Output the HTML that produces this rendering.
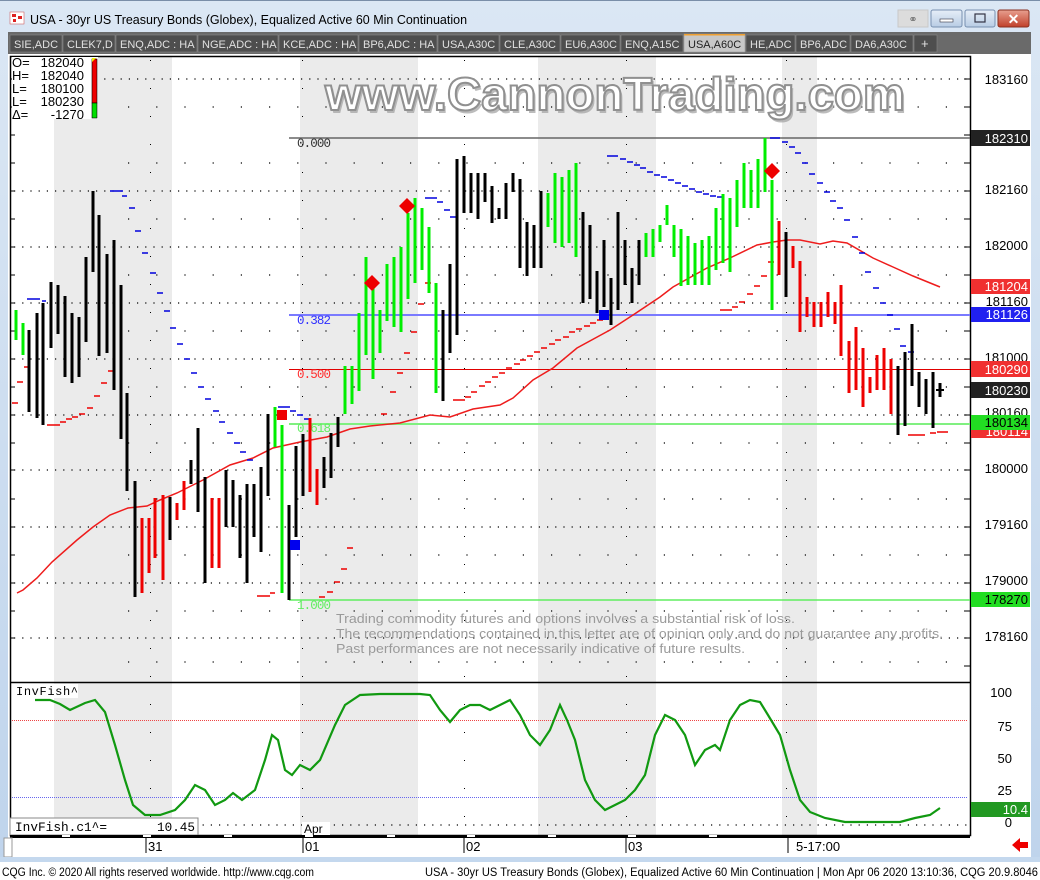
<!DOCTYPE html>
<html><head><meta charset="utf-8"><style>
html,body{margin:0;padding:0;width:1040px;height:880px;overflow:hidden;background:#fff;font-family:"Liberation Sans",sans-serif}
svg{position:absolute;left:0;top:0}
</style></head><body>
<svg width="1040" height="880" viewBox="0 0 1040 880" xmlns="http://www.w3.org/2000/svg" font-family="Liberation Sans, sans-serif">
<defs>
<linearGradient id="tb" x1="0" y1="0" x2="0" y2="1"><stop offset="0" stop-color="#dbe7f4"/><stop offset="1" stop-color="#bfd4ec"/></linearGradient>
<linearGradient id="cl" x1="0" y1="0" x2="0" y2="1"><stop offset="0" stop-color="#e8a090"/><stop offset="1" stop-color="#c0402a"/></linearGradient>
<linearGradient id="bt" x1="0" y1="0" x2="0" y2="1"><stop offset="0" stop-color="#e6eef8"/><stop offset="1" stop-color="#b8cce4"/></linearGradient>
</defs>
<rect x="0" y="0" width="1040" height="862" fill="url(#tb)"/>
<rect x="0" y="0" width="1040" height="1" fill="#7a8ea8"/>
<rect x="10" y="12" width="14" height="12" fill="#fff" stroke="#c44" stroke-width="0.5"/>
<rect x="12" y="14" width="4" height="3" fill="#d22"/><rect x="18" y="16" width="4" height="3" fill="#d22"/><rect x="13" y="19" width="3" height="3" fill="#d22"/>
<text x="30" y="24" font-size="12.5" fill="#000">USA - 30yr US Treasury Bonds (Globex), Equalized Active 60 Min Continuation</text>
<rect x="898" y="10" width="30" height="17" fill="#dcdcdc" stroke="#c8c8c8"/>
<text x="913" y="23" font-size="11" fill="#777" text-anchor="middle">⚭</text>
<rect x="931" y="10" width="31" height="17" rx="2" fill="url(#bt)" stroke="#7890b0"/>
<rect x="940" y="19" width="13" height="3" fill="#fff" stroke="#334" stroke-width="0.6"/>
<rect x="965" y="10" width="30" height="17" rx="2" fill="url(#bt)" stroke="#7890b0"/>
<rect x="975" y="14" width="10" height="8" fill="none" stroke="#334" stroke-width="1.2"/>
<rect x="998" y="10" width="31" height="17" rx="2" fill="url(#cl)" stroke="#8a3020"/>
<text x="1013.5" y="24" font-size="14" font-weight="bold" fill="#fff" text-anchor="middle">✕</text>
<rect x="8" y="32" width="1023" height="22" fill="#6a6a6a"/>
<g font-size="11" fill="#e0e0e0">
<rect x="10" y="35" width="52" height="17" fill="#4e4e4e" stroke="#888" stroke-width="0.6"/><text x="14" y="48">SIE,ADC</text>
<rect x="63" y="35" width="52" height="17" fill="#4e4e4e" stroke="#888" stroke-width="0.6"/><text x="67" y="48">CLEK7,D</text>
<rect x="116" y="35" width="81" height="17" fill="#4e4e4e" stroke="#888" stroke-width="0.6"/><text x="120" y="48">ENQ,ADC : HA</text>
<rect x="198" y="35" width="80" height="17" fill="#4e4e4e" stroke="#888" stroke-width="0.6"/><text x="202" y="48">NGE,ADC : HA</text>
<rect x="279" y="35" width="79" height="17" fill="#4e4e4e" stroke="#888" stroke-width="0.6"/><text x="283" y="48">KCE,ADC : HA</text>
<rect x="359" y="35" width="78" height="17" fill="#4e4e4e" stroke="#888" stroke-width="0.6"/><text x="363" y="48">BP6,ADC : HA</text>
<rect x="438" y="35" width="61" height="17" fill="#4e4e4e" stroke="#888" stroke-width="0.6"/><text x="442" y="48">USA,A30C</text>
<rect x="500" y="35" width="60" height="17" fill="#4e4e4e" stroke="#888" stroke-width="0.6"/><text x="504" y="48">CLE,A30C</text>
<rect x="561" y="35" width="59" height="17" fill="#4e4e4e" stroke="#888" stroke-width="0.6"/><text x="565" y="48">EU6,A30C</text>
<rect x="621" y="35" width="62" height="17" fill="#4e4e4e" stroke="#888" stroke-width="0.6"/><text x="625" y="48">ENQ,A15C</text>
<rect x="684" y="34" width="61" height="18" fill="#c8c8c8" stroke="#999" stroke-width="0.6"/><rect x="684" y="34" width="61" height="1.5" fill="#f0a030"/><text x="688" y="48" fill="#222">USA,A60C</text>
<rect x="746" y="35" width="49" height="17" fill="#4e4e4e" stroke="#888" stroke-width="0.6"/><text x="750" y="48">HE,ADC</text>
<rect x="796" y="35" width="54" height="17" fill="#4e4e4e" stroke="#888" stroke-width="0.6"/><text x="800" y="48">BP6,ADC</text>
<rect x="851" y="35" width="62" height="17" fill="#4e4e4e" stroke="#888" stroke-width="0.6"/><text x="855" y="48">DA6,A30C</text>
<rect x="914" y="35" width="23" height="17" fill="#4e4e4e" stroke="#888" stroke-width="0.6"/><text x="921" y="48" font-size="13">+</text>
</g>
<rect x="8" y="54" width="1023" height="808" fill="#fff"/>
<g fill="#ebebeb">
<rect x="54" y="57" width="118" height="778"/><rect x="300" y="57" width="118" height="778"/><rect x="538" y="57" width="118" height="778"/><rect x="782" y="57" width="35" height="778"/>
</g>
<rect x="10.5" y="56.5" width="960" height="779" fill="none" stroke="#000" stroke-width="1.5"/>
<line x1="10" y1="682.5" x2="971" y2="682.5" stroke="#000" stroke-width="1.5"/>
<g stroke="#000" stroke-width="1.2" stroke-dasharray="1.2 7">
<line x1="14" y1="79" x2="968" y2="79"/><line x1="14" y1="191" x2="968" y2="191"/><line x1="14" y1="247" x2="968" y2="247"/><line x1="14" y1="303" x2="968" y2="303"/><line x1="14" y1="359" x2="968" y2="359"/><line x1="14" y1="415" x2="968" y2="415"/><line x1="14" y1="470" x2="968" y2="470"/><line x1="14" y1="527" x2="968" y2="527"/><line x1="14" y1="583" x2="968" y2="583"/><line x1="14" y1="638" x2="968" y2="638"/>
<line x1="14" y1="825" x2="968" y2="825"/>
</g>
<g stroke="#000" stroke-width="1.2" stroke-dasharray="1.2 27">
<line x1="128" y1="163" x2="968" y2="163"/><line x1="128" y1="219" x2="968" y2="219"/><line x1="128" y1="275" x2="968" y2="275"/><line x1="128" y1="331" x2="968" y2="331"/><line x1="128" y1="387" x2="968" y2="387"/><line x1="128" y1="443" x2="968" y2="443"/><line x1="128" y1="499" x2="968" y2="499"/><line x1="128" y1="555" x2="968" y2="555"/><line x1="128" y1="611" x2="968" y2="611"/><line x1="128" y1="107" x2="968" y2="107"/><line x1="128" y1="662" x2="968" y2="662"/>
</g>
<g stroke="#000" stroke-width="1" stroke-dasharray="1 27">
<line x1="302.5" y1="60" x2="302.5" y2="835"/><line x1="464.5" y1="60" x2="464.5" y2="835"/><line x1="626.5" y1="60" x2="626.5" y2="835"/><line x1="786.5" y1="60" x2="786.5" y2="835"/><line x1="150.5" y1="60" x2="150.5" y2="835"/>
</g>
<g stroke="#000" stroke-width="1"><path d="M964 79h6M964 107h6M964 135h6M964 163h6M964 191h6M964 219h6M964 247h6M964 275h6M964 303h6M964 331h6M964 359h6M964 387h6M964 415h6M964 443h6M964 470h6M964 499h6M964 527h6M964 555h6M964 583h6M964 611h6M964 638h6M964 666h6"/><path d="M10 79h5M10 107h5M10 135h5M10 163h5M10 191h5M10 219h5M10 247h5M10 275h5M10 303h5M10 331h5M10 359h5M10 387h5M10 415h5M10 443h5M10 470h5M10 499h5M10 527h5M10 555h5M10 583h5M10 611h5M10 638h5"/></g>
<text x="325" y="110" font-size="46" font-weight="bold" fill="#a0a0a0" textLength="580" lengthAdjust="spacingAndGlyphs" transform="translate(2,3)" opacity="0.7">www.CannonTrading.com</text>
<text x="325" y="110" font-size="46" font-weight="bold" fill="#fff" stroke="#909090" stroke-width="2" textLength="580" lengthAdjust="spacingAndGlyphs">www.CannonTrading.com</text>
<line x1="289" y1="138" x2="970" y2="138" stroke="#666" stroke-width="1.5"/>
<line x1="289" y1="315" x2="970" y2="315" stroke="#7a7aff" stroke-width="2"/>
<line x1="289" y1="369.5" x2="970" y2="369.5" stroke="#e00000" stroke-width="1"/>
<line x1="289" y1="424" x2="970" y2="424" stroke="#80f080" stroke-width="2"/>
<line x1="289" y1="600" x2="970" y2="600" stroke="#60ee60" stroke-width="1.5"/>
<g font-size="12.5" font-family="Liberation Mono, monospace">
<text x="297" y="147" fill="#333" textLength="34">0.000</text>
<text x="297" y="324" fill="#3030ff" textLength="34">0.382</text>
<text x="297" y="378" fill="#ff3030" textLength="34">0.500</text>
<text x="297" y="432" fill="#60ee60" textLength="34">0.618</text>
<text x="297" y="609" fill="#60ee60" textLength="34">1.000</text>
</g>
<polyline fill="none" stroke="#ee1c1c" stroke-width="1.5" points="17,593 23,590 37,578 52,562 77,540 93,527 110,515 128,508 147,506 160,500 177,493 203,480 230,465 253,458 273,448 300,442 327,437 350,429 370,426 400,423 430,415 450,417 473,409 500,405 513,398 533,380 553,368 577,348 610,330 633,315 660,297 673,287 707,268 730,258 757,245 773,242 787,240 800,240 820,244 833,241 847,243 873,258 893,267 913,276 940,287"/>
<path fill="none" stroke="#0000dd" stroke-width="1.5" d="M27 299h13M42 301h4M110 191h13M122 196h5M129 208h6M135 231h6M142 253h6M150 273h6M157 293h6M164 311h6M170 328h6M177 344h6M184 359h6M191 373h6M198 387h6M205 399h6M213 411h6M219 422h6M227 433h6M234 443h6M240 452h6M247 460h6M278 407h12M290 411h6M297 415h6M304 419h6M425 198h12M437 202h6M444 210h6M450 217h6M607 156h11M620 159h6M627 162h6M634 165h6M640 168h6M647 172h6M654 175h6M661 177h6M668 180h6M675 183h6M682 186h6M689 189h6M696 192h6M703 194h6M710 196h6M717 197h6M770 138h10M782 142h6M789 147h6M795 153h6M802 163h6M809 174h6M817 183h6M824 192h6M830 201h6M837 208h6M844 220h6M852 237h6M859 253h6M865 272h6M873 288h6M880 303h6M887 315h6M894 329h6M900 346h6M908 352h6"/>
<path fill="none" stroke="#ee0000" stroke-width="1.5" d="M12 403h6M17 382h6M24 367h6M47 425h13M60 422h6M66 419h6M72 417h6M79 414h6M87 408h6M94 396h6M101 383h6M108 371h6M257 596h13M270 593h5M319 597h6M327 592h6M334 582h6M341 569h6M347 548h6M381 414h6M390 392h6M397 373h6M404 353h6M411 332h6M418 304h6M425 283h6M453 400h12M465 397h6M471 392h6M479 386h6M485 382h6M492 377h6M499 373h6M506 368h6M514 364h6M520 360h6M527 356h6M534 352h6M541 348h6M549 344h6M555 340h6M563 337h6M569 332h6M576 329h6M584 326h6M590 323h6M597 320h6M720 310h12M732 307h6M739 302h6M747 294h6M754 286h6M761 276h6M768 262h6M908 435h17M930 433h6M937 432h11"/>
<path fill="none" stroke="#00ee00" stroke-width="3" d="M16 310V340M23 323V355M275 407V447M282 425V593M345 366V414M352 366V404M359 313V391M366 257V355M373 283V379M380 310V353M387 264V321M394 257V327M401 247V332M408 213V299M415 198V283M422 208V270M429 227V293M436 283V393M548 193V227M555 173V243M562 177V247M569 170V243M576 163V257M646 233V257M653 229V257M660 225V242M667 205V225M674 225V257M681 229V286M688 236V285M695 243V285M702 240V285M709 236V285M716 208V270M723 194V263M730 198V272M737 180V227M744 163V208M751 170V208M758 159V208M765 138V192M772 180V310"/>
<path fill="none" stroke="#000" stroke-width="3" d="M29 330V412M37 313V418M43 303V425M51 282V348M58 285V334M65 296V377M72 313V383M79 317V377M86 257V342M93 191V272M99 215V356M107 254V353M114 240V390M121 285V439M127 393V491M135 481V597M170 497V540M191 460V484M198 428V512M205 477V583M226 470V527M233 480V527M240 495V558M247 484V583M254 484V537M261 467V552M268 414V496M289 505V600M296 446V537M303 434V496M324 457V488M331 433V478M338 417V447M443 310V401M450 264V353M457 159V335M464 156V213M471 173V213M478 173V219M485 173V202M492 186V223M499 208V219M506 183V219M513 173V192M520 179V268M527 222V276M534 225V268M541 191V268M583 212V303M590 225V299M597 271V313M604 240V307M611 278V325M618 212V310M625 240V285M632 268V303M639 240V285M786 232V297M898 366V435M905 352V426M912 324V386M919 372V407M926 379V414M933 372V428M940 383V397"/>
<path fill="none" stroke="#ee0000" stroke-width="3" d="M142 518V593M149 518V573M155 498V558M163 495V580M177 503V520M184 481V510M212 498V568M219 498V568M310 418V492M317 469V505M779 221V275M793 246V268M800 261V332M807 297V317M814 302V327M821 302V327M828 292V317M835 302V324M841 285V356M849 341V393M856 327V390M863 348V407M870 377V393M877 355V390M884 348V390M891 359V414"/>
<path fill="none" stroke="#000" stroke-width="2" d="M936 390h8"/>
<g fill="#ee0000"><path d="M372 275l8 8-8 8-8-8z"/><path d="M407 198l8 8-8 8-8-8z"/><path d="M772 163l8 8-8 8-8-8z"/><rect x="277" y="410" width="10" height="10"/></g>
<g fill="#0000ee"><rect x="290" y="540" width="10" height="10"/><rect x="599" y="310" width="10" height="10"/></g>
<g font-size="12.5" fill="#9a9a9a">
<text x="336" y="623" textLength="459" lengthAdjust="spacingAndGlyphs">Trading commodity futures and options involves a substantial risk of loss.</text>
<text x="336" y="638" textLength="607" lengthAdjust="spacingAndGlyphs">The recommendations contained in this letter are of opinion only and do not guarantee any profits.</text>
<text x="336" y="653" textLength="409" lengthAdjust="spacingAndGlyphs">Past performances are not necessarily indicative of future results.</text>
</g>
<rect x="12" y="57" width="86" height="62" fill="#fff"/>
<g font-size="13" fill="#000">
<text x="12" y="67">O=</text><text x="12" y="80">H=</text><text x="12" y="93">L=</text><text x="12" y="106">L=</text><text x="12" y="119">Δ=</text>
</g>
<g font-size="13" fill="#000" text-anchor="end">
<text x="84" y="67">182040</text><text x="84" y="80">182040</text><text x="84" y="93">180100</text><text x="84" y="106">180230</text><text x="84" y="119">-1270</text>
</g>
<rect x="92" y="59" width="5" height="44" fill="#ee0000" stroke="#000" stroke-width="0.6"/>
<rect x="92" y="103" width="5" height="15" fill="#00dd00" stroke="#000" stroke-width="0.6"/>
<path d="M92 58h4l-4 4z" fill="#ee0"/>
<g font-size="13" fill="#000" text-anchor="end">
<text x="1028" y="84">183160</text><text x="1028" y="194">182160</text><text x="1028" y="250">182000</text><text x="1028" y="306">181160</text><text x="1028" y="362">181000</text><text x="1028" y="417">180160</text><text x="1028" y="473">180000</text><text x="1028" y="529">179160</text><text x="1028" y="585">179000</text><text x="1028" y="641">178160</text>
</g>
<g font-size="13" text-anchor="end">
<rect x="971" y="130" width="59" height="16" fill="#222"/><text x="1028" y="143" fill="#fff">182310</text>
<rect x="971" y="279" width="59" height="15" fill="#f03030"/><text x="1028" y="291" fill="#fff">181204</text>
<rect x="971" y="307" width="59" height="15" fill="#2020f0"/><text x="1028" y="319" fill="#fff">181126</text>
<rect x="971" y="361" width="59" height="16" fill="#f03030"/><text x="1028" y="374" fill="#fff">180290</text>
<rect x="971" y="382" width="59" height="16" fill="#222"/><text x="1028" y="395" fill="#fff">180230</text>
<rect x="971" y="424" width="59" height="14" fill="#f03030"/><text x="1028" y="436" fill="#fff">180114</text>
<rect x="971" y="415" width="59" height="15" fill="#22dd22"/><text x="1028" y="427" fill="#000">180134</text>
<rect x="971" y="592" width="59" height="15" fill="#22dd22"/><text x="1028" y="604" fill="#000">178270</text>
</g>
<line x1="12" y1="720.5" x2="968" y2="720.5" stroke="#ee4444" stroke-width="1" stroke-dasharray="1 1"/>
<line x1="12" y1="797.5" x2="968" y2="797.5" stroke="#6666ee" stroke-width="1" stroke-dasharray="1 1"/>
<polyline fill="none" stroke="#119911" stroke-width="2.2" points="35,700 50,700 60,704 70,710 85,703 95,700 105,712 115,745 125,780 133,805 145,815 160,815 175,810 185,800 195,785 205,790 215,805 225,800 233,793 242,800 255,790 265,760 272,735 278,740 285,770 292,775 300,765 310,770 320,760 335,725 345,705 360,695 380,694 420,694 430,695 440,710 450,722 460,710 470,705 480,705 490,710 500,705 510,700 520,715 530,735 540,745 550,730 560,705 567,720 575,740 585,780 595,800 605,810 615,805 625,800 635,790 645,775 655,735 665,715 675,720 685,735 695,765 705,750 715,745 720,750 730,720 740,705 750,700 760,702 768,715 780,735 790,770 800,800 810,812 825,818 845,822 880,822 900,822 915,818 930,815 940,808"/>
<rect x="12" y="684" width="66" height="14" fill="#fff"/>
<text x="16" y="695" font-size="12" font-family="Liberation Mono, monospace" fill="#000" textLength="62">InvFish^</text>
<g font-size="13" fill="#000" text-anchor="end">
<text x="1012" y="697">100</text><text x="1012" y="731">75</text><text x="1012" y="763">50</text><text x="1012" y="795">25</text><text x="1012" y="827">0</text>
</g>
<rect x="971" y="802" width="59" height="15" fill="#229922"/><text x="1028" y="814" font-size="13" fill="#fff" text-anchor="end">10.4</text>
<rect x="10" y="818" width="188" height="17" fill="#fff" stroke="#888"/>
<text x="15" y="831" font-size="13" font-family="Liberation Mono, monospace" fill="#000" textLength="92" lengthAdjust="spacingAndGlyphs">InvFish.c1^=</text>
<text x="195" y="831" font-size="13" font-family="Liberation Mono, monospace" fill="#000" text-anchor="end" textLength="38" lengthAdjust="spacingAndGlyphs">10.45</text>
<rect x="302" y="822" width="28" height="13" fill="#fff"/><text x="304" y="833" font-size="12" fill="#000">Apr</text>
<rect x="10" y="835" width="960" height="3" fill="#000"/>
<g fill="#fff"><rect x="62" y="835" width="8" height="2"/><rect x="143" y="835" width="8" height="2"/><rect x="224" y="835" width="8" height="2"/><rect x="305" y="835" width="8" height="2"/><rect x="387" y="835" width="8" height="2"/><rect x="467" y="835" width="8" height="2"/><rect x="548" y="835" width="8" height="2"/><rect x="628" y="835" width="8" height="2"/><rect x="709" y="835" width="8" height="2"/></g>
<rect x="4" y="838" width="8" height="19" fill="#fff" stroke="#999"/>
<g stroke="#000"><line x1="146" y1="838" x2="146" y2="853"/><line x1="303" y1="838" x2="303" y2="853"/><line x1="464" y1="838" x2="464" y2="853"/><line x1="626" y1="838" x2="626" y2="853"/><line x1="788" y1="838" x2="788" y2="853"/></g>
<g font-size="13" fill="#000"><text x="148" y="851">31</text><text x="305" y="851">01</text><text x="466" y="851">02</text><text x="628" y="851">03</text><text x="796" y="851">5-17:00</text></g>
<path d="M1012 845l8-7v4h8v6h-8v4z" fill="#ee0000"/>
<rect x="0" y="857" width="1040" height="5" fill="#c4d8ee"/>
<rect x="0" y="862" width="1040" height="18" fill="#fff"/>
<text x="2" y="876" font-size="11.5" fill="#000" textLength="312" lengthAdjust="spacingAndGlyphs">CQG Inc. © 2020 All rights reserved worldwide. http://www.cqg.com</text>
<text x="425" y="876" font-size="11.5" fill="#000" textLength="613" lengthAdjust="spacingAndGlyphs">USA - 30yr US Treasury Bonds (Globex), Equalized Active 60 Min Continuation | Mon Apr 06 2020 13:10:36, CQG 20.9.8046</text>
</svg>
</body></html>
